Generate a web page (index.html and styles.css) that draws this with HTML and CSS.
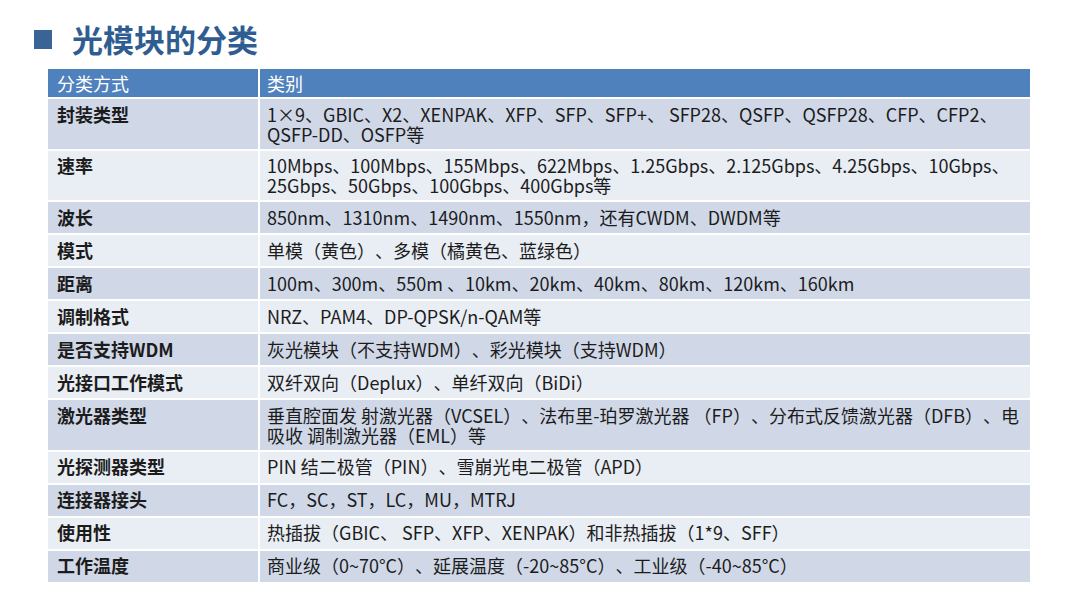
FILE: index.html
```html
<!DOCTYPE html>
<html lang="zh-CN">
<head>
<meta charset="utf-8">
<title>光模块的分类</title>
<link rel="stylesheet" href="styles.css">
</head>
<body>
<div class="slide">
  <div class="title">
    <span class="square"></span>
    <h1>光模块的分类</h1>
  </div>
  <table class="grid">
    <colgroup><col class="c1"><col class="c2"></colgroup>
    <thead>
      <tr><th>分类方式</th><th>类别</th></tr>
    </thead>
    <tbody>
      <tr class="dark two"><td>封装类型</td><td>1×9、GBIC、X2、XENPAK、XFP、SFP、SFP+、 SFP28、QSFP、QSFP28、CFP、CFP2、<br>QSFP-DD、OSFP等</td></tr>
      <tr class="light two"><td>速率</td><td>10Mbps、100Mbps、155Mbps、622Mbps、1.25Gbps、2.125Gbps、4.25Gbps、10Gbps、<br>25Gbps、50Gbps、100Gbps、400Gbps等</td></tr>
      <tr class="dark"><td>波长</td><td>850nm、1310nm、1490nm、1550nm，还有CWDM、DWDM等</td></tr>
      <tr class="light"><td>模式</td><td>单模（黄色）、多模（橘黄色、蓝绿色）</td></tr>
      <tr class="dark"><td>距离</td><td>100m、300m、550m 、10km、20km、40km、80km、120km、160km</td></tr>
      <tr class="light"><td>调制格式</td><td>NRZ、PAM4、DP-QPSK/n-QAM等</td></tr>
      <tr class="dark"><td>是否支持WDM</td><td>灰光模块（不支持WDM）、彩光模块（支持WDM）</td></tr>
      <tr class="light"><td>光接口工作模式</td><td>双纤双向（Deplux）、单纤双向（BiDi）</td></tr>
      <tr class="dark two"><td>激光器类型</td><td>垂直腔面发 射激光器（VCSEL）、法布里-珀罗激光器 （FP）、分布式反馈激光器（DFB）、电<br>吸收 调制激光器（EML）等</td></tr>
      <tr class="light"><td>光探测器类型</td><td>PIN 结二极管（PIN）、雪崩光电二极管（APD）</td></tr>
      <tr class="dark"><td>连接器接头</td><td>FC，SC，ST，LC，MU，MTRJ</td></tr>
      <tr class="light"><td>使用性</td><td>热插拔（GBIC、 SFP、XFP、XENPAK）和非热插拔（1*9、SFF）</td></tr>
      <tr class="dark"><td>工作温度</td><td>商业级（0~70°C）、延展温度（-20~85°C）、工业级（-40~85°C）</td></tr>
    </tbody>
  </table>
</div>
</body>
</html>
```

FILE: styles.css
```css
html, body {
  margin: 0;
  padding: 0;
  background: #ffffff;
}

.slide {
  width: 1080px;
  height: 608px;
  overflow: hidden;
  font-family: "Noto Sans CJK SC", "Noto Sans", sans-serif;
  color: #1c1c1c;
  text-spacing-trim: space-all;
}

.title {
  display: flex;
  align-items: center;
  gap: 20px;
  padding: 19px 0 0 34px;
  height: 40px;
}

.square {
  width: 18px;
  height: 19px;
  background: #3b6496;
  flex: none;
}

.title h1 {
  margin: 0;
  font-size: 31px;
  line-height: 40px;
  font-weight: 700;
  color: #2f5d92;
}

.grid {
  margin: 8px 0 0 46px;
  border-collapse: separate;
  border-spacing: 2px;
  table-layout: fixed;
  width: 986px;
  font-size: 18px;
}

.c1 { width: 210px; }
.c2 { width: 770px; }

.grid th {
  background: #4f81bd;
  color: #ffffff;
  font-weight: 400;
  text-align: left;
  height: 28px;
  padding: 0 8px 0 9px;
  line-height: 22px;
  box-sizing: border-box;
  vertical-align: middle;
}

.grid th + th {
  padding-left: 7px;
}

.grid td {
  padding: 4.5px 8px 6.5px 9px;
  line-height: 20px;
  vertical-align: top;
  text-align: left;
}

.grid .two td {
  padding-bottom: 5px;
}

.grid td:first-child {
  font-weight: 700;
}

.grid td + td {
  padding-left: 7px;
  white-space: nowrap;
}

.dark td { background: #d0d8e8; }
.light td { background: #e9edf4; }
```
